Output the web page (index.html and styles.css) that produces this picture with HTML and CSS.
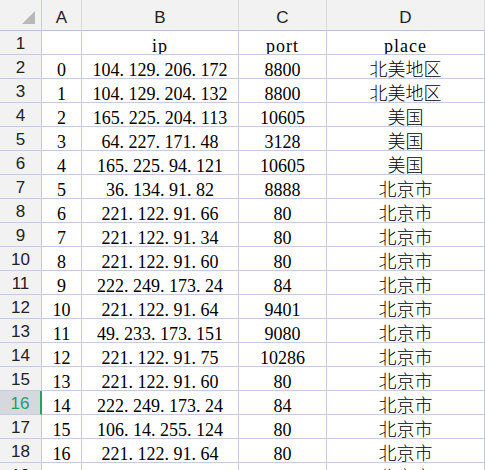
FILE: index.html
```html
<!DOCTYPE html>
<html lang="zh">
<head>
<meta charset="utf-8">
<title>Sheet</title>
<link rel="stylesheet" href="styles.css">
</head>
<body>
<div class="sheet">
  <div class="row head">
    <div class="cell corner"><span class="tri"></span></div>
    <div class="cell ch">A</div>
    <div class="cell ch">B</div>
    <div class="cell ch">C</div>
    <div class="cell ch">D</div>
    <div class="cell ch"></div>
  </div>
  <div class="row"><div class="cell rh">1</div><div class="cell"></div><div class="cell lbl">ip</div><div class="cell lbl">port</div><div class="cell lbl">place</div><div class="cell"></div></div>
  <div class="row"><div class="cell rh">2</div><div class="cell">0</div><div class="cell">104<span class="d">.</span>129<span class="d">.</span>206<span class="d">.</span>172</div><div class="cell">8800</div><div class="cell">北美地区</div><div class="cell"></div></div>
  <div class="row"><div class="cell rh">3</div><div class="cell">1</div><div class="cell">104<span class="d">.</span>129<span class="d">.</span>204<span class="d">.</span>132</div><div class="cell">8800</div><div class="cell">北美地区</div><div class="cell"></div></div>
  <div class="row"><div class="cell rh">4</div><div class="cell">2</div><div class="cell">165<span class="d">.</span>225<span class="d">.</span>204<span class="d">.</span>113</div><div class="cell">10605</div><div class="cell">美国</div><div class="cell"></div></div>
  <div class="row"><div class="cell rh">5</div><div class="cell">3</div><div class="cell">64<span class="d">.</span>227<span class="d">.</span>171<span class="d">.</span>48</div><div class="cell">3128</div><div class="cell">美国</div><div class="cell"></div></div>
  <div class="row"><div class="cell rh">6</div><div class="cell">4</div><div class="cell">165<span class="d">.</span>225<span class="d">.</span>94<span class="d">.</span>121</div><div class="cell">10605</div><div class="cell">美国</div><div class="cell"></div></div>
  <div class="row"><div class="cell rh">7</div><div class="cell">5</div><div class="cell">36<span class="d">.</span>134<span class="d">.</span>91<span class="d">.</span>82</div><div class="cell">8888</div><div class="cell">北京市</div><div class="cell"></div></div>
  <div class="row"><div class="cell rh">8</div><div class="cell">6</div><div class="cell">221<span class="d">.</span>122<span class="d">.</span>91<span class="d">.</span>66</div><div class="cell">80</div><div class="cell">北京市</div><div class="cell"></div></div>
  <div class="row"><div class="cell rh">9</div><div class="cell">7</div><div class="cell">221<span class="d">.</span>122<span class="d">.</span>91<span class="d">.</span>34</div><div class="cell">80</div><div class="cell">北京市</div><div class="cell"></div></div>
  <div class="row"><div class="cell rh">10</div><div class="cell">8</div><div class="cell">221<span class="d">.</span>122<span class="d">.</span>91<span class="d">.</span>60</div><div class="cell">80</div><div class="cell">北京市</div><div class="cell"></div></div>
  <div class="row"><div class="cell rh">11</div><div class="cell">9</div><div class="cell">222<span class="d">.</span>249<span class="d">.</span>173<span class="d">.</span>24</div><div class="cell">84</div><div class="cell">北京市</div><div class="cell"></div></div>
  <div class="row"><div class="cell rh">12</div><div class="cell">10</div><div class="cell">221<span class="d">.</span>122<span class="d">.</span>91<span class="d">.</span>64</div><div class="cell">9401</div><div class="cell">北京市</div><div class="cell"></div></div>
  <div class="row"><div class="cell rh">13</div><div class="cell">11</div><div class="cell">49<span class="d">.</span>233<span class="d">.</span>173<span class="d">.</span>151</div><div class="cell">9080</div><div class="cell">北京市</div><div class="cell"></div></div>
  <div class="row"><div class="cell rh">14</div><div class="cell">12</div><div class="cell">221<span class="d">.</span>122<span class="d">.</span>91<span class="d">.</span>75</div><div class="cell">10286</div><div class="cell">北京市</div><div class="cell"></div></div>
  <div class="row"><div class="cell rh">15</div><div class="cell">13</div><div class="cell">221<span class="d">.</span>122<span class="d">.</span>91<span class="d">.</span>60</div><div class="cell">80</div><div class="cell">北京市</div><div class="cell"></div></div>
  <div class="row"><div class="cell rh sel">16</div><div class="cell">14</div><div class="cell">222<span class="d">.</span>249<span class="d">.</span>173<span class="d">.</span>24</div><div class="cell">84</div><div class="cell">北京市</div><div class="cell"></div></div>
  <div class="row"><div class="cell rh">17</div><div class="cell">15</div><div class="cell">106<span class="d">.</span>14<span class="d">.</span>255<span class="d">.</span>124</div><div class="cell">80</div><div class="cell">北京市</div><div class="cell"></div></div>
  <div class="row"><div class="cell rh">18</div><div class="cell">16</div><div class="cell">221<span class="d">.</span>122<span class="d">.</span>91<span class="d">.</span>64</div><div class="cell">80</div><div class="cell">北京市</div><div class="cell"></div></div>
  <div class="row"><div class="cell rh">19</div><div class="cell">17</div><div class="cell">221<span class="d">.</span>122<span class="d">.</span>91<span class="d">.</span>66</div><div class="cell">80</div><div class="cell">北京市</div><div class="cell"></div></div>
</div>
</body>
</html>
```
FILE: styles.css
```css
html, body {
  margin: 0;
  padding: 0;
  background: #ffffff;
  overflow: hidden;
}
.sheet {
  width: 485px;
  height: 470px;
  overflow: hidden;
  font-family: "Liberation Serif", "Noto Sans CJK SC", serif;
  font-size: 18px;
  font-weight: 300;
  color: #000;
}
.row {
  display: grid;
  grid-template-columns: 42px 40px 157px 88px 158px 1fr;
  height: 24px;
}
.cell {
  box-sizing: border-box;
  border-right: 1px solid #c6cbdd;
  border-bottom: 1px solid #c6cbdd;
  text-align: center;
  white-space: nowrap;
  overflow: hidden;
  padding-top: 5px;
  line-height: 20px;
}
.cell .d {
  margin-right: 4.5px;
}
.lbl {
  letter-spacing: 1px;
}
.row.head {
  height: 31px;
}
.head .cell {
  background: #f2f2f2;
  border-right: 1px solid #dcdcdc;
  border-bottom: 1px solid #bac1d6;
  padding-top: 8px;
  line-height: 19px;
  font-family: "Liberation Sans", sans-serif;
  font-size: 17px;
  font-weight: 400;
  color: #222;
}
.head .corner {
  display: flex;
  justify-content: flex-end;
  align-items: flex-end;
  padding: 0 6px 6px 0;
  border-right: 1px solid #c6cbdd;
}
.tri {
  width: 0;
  height: 0;
  border-left: 13px solid transparent;
  border-bottom: 13px solid #b8b8b8;
}
.rh {
  background: #f2f2f2;
  font-family: "Liberation Sans", sans-serif;
  font-size: 17px;
  font-weight: 400;
  padding-top: 3px;
  line-height: 19px;
  color: #222;
}
.rh.sel {
  background: #d5d8dd;
  color: #1f9e68;
  border-right: 2px solid #21a366;
}
```
